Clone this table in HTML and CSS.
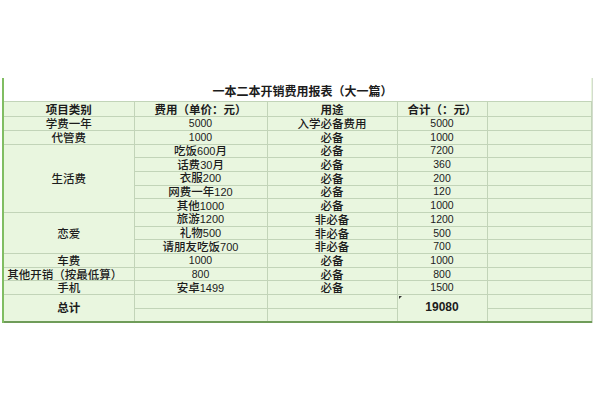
FILE: index.html
```html
<!DOCTYPE html>
<html lang="zh">
<head>
<meta charset="utf-8">
<title>一本二本开销费用报表</title>
<link rel="stylesheet" href="styles.css">
</head>
<body>
<div class="sheet">
  <table class="report">
    <colgroup>
      <col class="c1"><col class="c2"><col class="c3"><col class="c4"><col class="c5">
    </colgroup>
    <tr class="title-row"><td colspan="5" class="title">一本二本开销费用报表（大一篇）</td></tr>
    <tr class="head">
      <th>项目类别</th><th>费用（单价：元）</th><th>用途</th><th>合计（：元）</th><th></th>
    </tr>
    <tr><td>学费一年</td><td class="num">5000</td><td>入学必备费用</td><td class="num">5000</td><td></td></tr>
    <tr><td>代管费</td><td class="num">1000</td><td>必备</td><td class="num">1000</td><td></td></tr>
    <tr><td rowspan="5">生活费</td><td>吃饭<span class="dig">600</span>月</td><td>必备</td><td class="num">7200</td><td></td></tr>
    <tr><td>话费<span class="dig">30</span>月</td><td>必备</td><td class="num">360</td><td></td></tr>
    <tr><td>衣服<span class="dig">200</span></td><td>必备</td><td class="num">200</td><td></td></tr>
    <tr><td>网费一年<span class="dig">120</span></td><td>必备</td><td class="num">120</td><td></td></tr>
    <tr><td>其他<span class="dig">1000</span></td><td>必备</td><td class="num">1000</td><td></td></tr>
    <tr><td rowspan="3">恋爱</td><td>旅游<span class="dig">1200</span></td><td>非必备</td><td class="num">1200</td><td></td></tr>
    <tr><td>礼物<span class="dig">500</span></td><td>非必备</td><td class="num">500</td><td></td></tr>
    <tr><td>请朋友吃饭<span class="dig">700</span></td><td>非必备</td><td class="num">700</td><td></td></tr>
    <tr><td>车费</td><td class="num">1000</td><td>必备</td><td class="num">1000</td><td></td></tr>
    <tr><td class="wide">其他开销（按最低算）</td><td class="num">800</td><td>必备</td><td class="num">800</td><td></td></tr>
    <tr><td>手机</td><td>安卓<span class="dig">1499</span></td><td>必备</td><td class="num">1500</td><td></td></tr>
    <tr class="total-a"><td rowspan="2" class="strong">总计</td><td></td><td></td><td rowspan="2" class="num strong marked">19080</td><td></td></tr>
    <tr class="total-b"><td></td><td></td><td></td></tr>
  </table>
</div>
</body>
</html>
```
FILE: styles.css
```css
html, body {
  margin: 0;
  padding: 0;
  background: #ffffff;
}

body {
  font-family: "Noto Sans CJK SC", "Noto Sans CJK TC", sans-serif;
  color: #1c1c1c;
}

.sheet {
  margin: 78px 0 0 2px;
  width: 588px;
  border-left: 2px solid #80bd62;
  border-right: 1px solid #d3dccd;
}

.report {
  border-collapse: collapse;
  table-layout: fixed;
  width: 587px;
  background: #e9f6df;
}

.c1 { width: 130px; }
.c2 { width: 133px; }
.c3 { width: 130px; }
.c4 { width: 90px; }
.c5 { width: 104px; }

.report td,
.report th {
  border: 1px solid #c2d4b8;
  padding: 0;
  text-align: center;
  vertical-align: middle;
  font-size: 11.5px;
  line-height: 11px;
  font-weight: 500;
  white-space: nowrap;
  overflow: visible;
}

.report tr { height: 13.7px; }

.report tr td:first-child,
.report tr th:first-child {
  border-left: none;
}

.report tr.title-row { height: 23.7px; }

.report .title {
  background: #ffffff;
  border-top: none;
  border-left: none;
  border-right: none;
  font-weight: 700;
  font-size: 12px;
  padding-left: 10px;
  padding-top: 2px;
}

.report tr.head { height: 15px; }

.report th {
  font-weight: 700;
}

.num,
.dig {
  font-family: "Liberation Sans", Arial, sans-serif;
  font-weight: 400;
}

.dig {
  font-size: 11px;
}

.report td.num {
  font-size: 10.5px;
  font-weight: 400;
}

.report td.wide {
  padding-right: 8px;
}

.report td.strong {
  font-weight: 700;
}

.report td.num.strong {
  font-size: 12px;
  font-weight: 700;
}

.report tr.total-a,
.report tr.total-b { height: 13.5px; }

.total-b td,
.total-a td[rowspan] {
  border-bottom: 2px solid #6f9c59;
}

.marked {
  position: relative;
}

.marked::before {
  content: "";
  position: absolute;
  left: 1px;
  top: 1px;
  width: 0;
  height: 0;
  border-top: 3px solid #333;
  border-right: 3px solid transparent;
}
```
